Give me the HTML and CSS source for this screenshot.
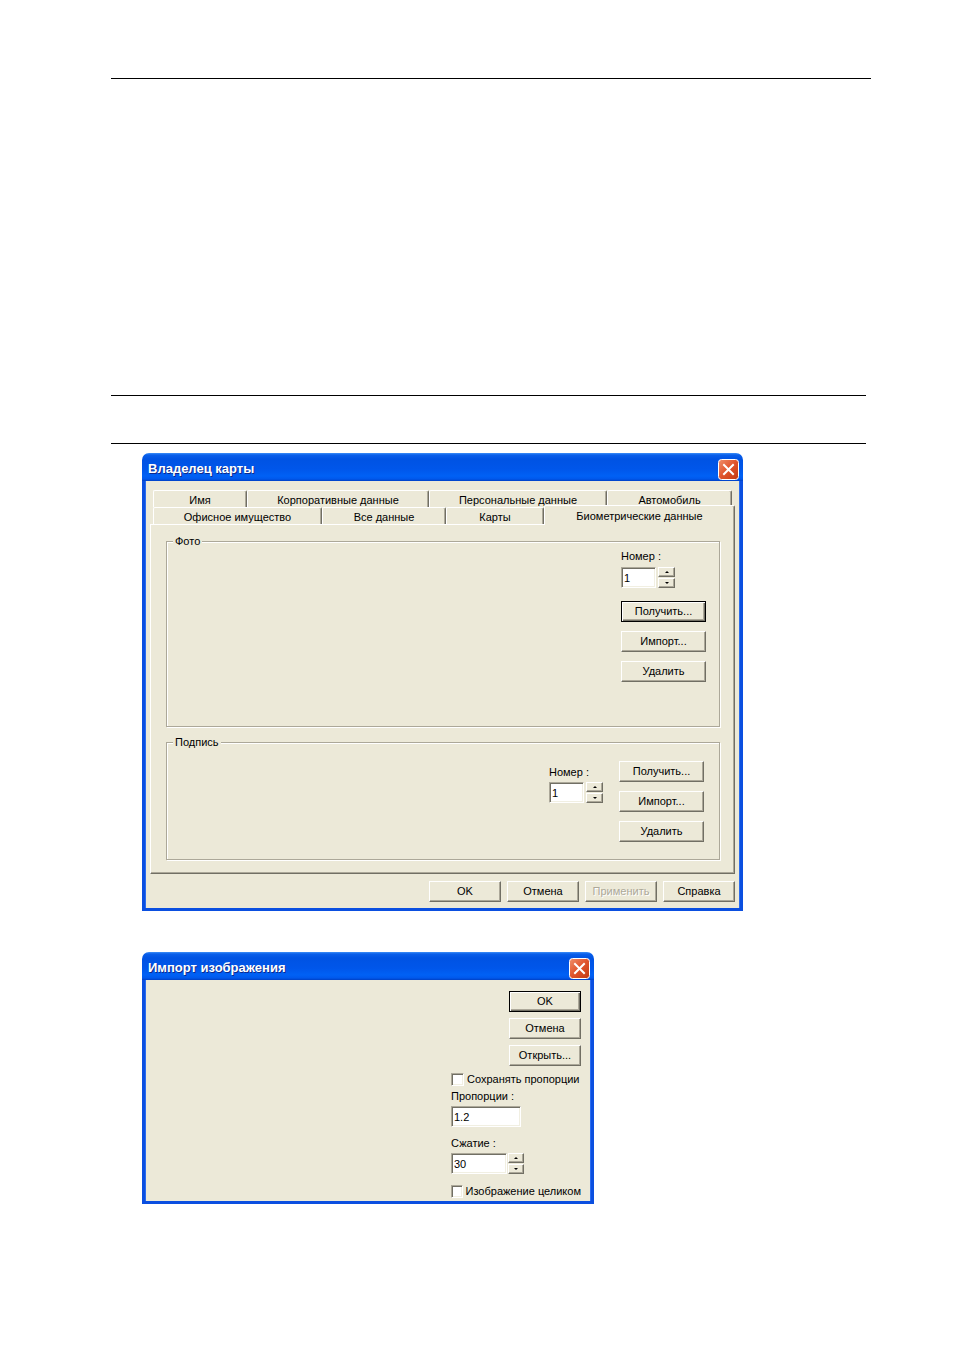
FILE: index.html
```html
<!DOCTYPE html>
<html lang="ru">
<head>
    <meta charset="UTF-8">
    <title>Владелец карты</title>
    <link rel="stylesheet" href="styles.css">
</head>
<body>
<div class="page">

    <div class="rule rule-top"></div>
    <div class="rule rule-mid"></div>
    <div class="rule rule-low"></div>

    <!-- окно свойств владельца карты -->
    <div class="window win-owner">
        <div class="titlebar">
            <span class="title">Владелец карты</span>
            <svg class="close" width="21" height="21" viewBox="0 0 21 21">
                <defs>
                    <linearGradient id="closeFill1" x1="0" y1="0" x2="1" y2="1">
                        <stop offset="0" stop-color="#f0906c"/>
                        <stop offset="0.5" stop-color="#e0532b"/>
                        <stop offset="1" stop-color="#c23a12"/>
                    </linearGradient>
                </defs>
                <rect x="0.5" y="0.5" width="20" height="20" rx="3" fill="url(#closeFill1)" stroke="#fff"/>
                <path d="M6 6 L15 15 M15 6 L6 15" stroke="#fff" stroke-width="2" stroke-linecap="square"/>
            </svg>
        </div>
        <div class="client owner-client">
            <div class="tab-row tab-row-back">
                <div class="tab" style="width:94px">Имя</div>
                <div class="tab" style="width:182px">Корпоративные данные</div>
                <div class="tab" style="width:178px">Персональные данные</div>
                <div class="tab" style="width:125px">Автомобиль</div>
            </div>
            <div class="tab-row tab-row-front">
                <div class="tab" style="width:169px">Офисное имущество</div>
                <div class="tab" style="width:124px">Все данные</div>
                <div class="tab" style="width:98px">Карты</div>
                <div class="tab tab-active" style="width:191px">Биометрические данные</div>
            </div>

            <div class="tab-panel">
                <div class="group group-photo">
                    <div class="group-label">Фото</div>
                    <div class="photo-body">
                        <div class="side-col">
                            <div class="field-label">Номер :</div>
                            <div class="spin-row">
                                <div class="edit edit-num">1</div>
                                <div class="spinner">
                                    <div class="spin-btn"><span class="arrow-up"></span></div>
                                    <div class="spin-btn"><span class="arrow-down"></span></div>
                                </div>
                            </div>
                            <div class="btn btn-side btn-default">Получить...</div>
                            <div class="btn btn-side">Импорт...</div>
                            <div class="btn btn-side">Удалить</div>
                        </div>
                    </div>
                </div>

                <div class="group group-sign">
                    <div class="group-label">Подпись</div>
                    <div class="sign-body">
                        <div class="num-col">
                            <div class="field-label">Номер :</div>
                            <div class="spin-row">
                                <div class="edit edit-num">1</div>
                                <div class="spinner">
                                    <div class="spin-btn"><span class="arrow-up"></span></div>
                                    <div class="spin-btn"><span class="arrow-down"></span></div>
                                </div>
                            </div>
                        </div>
                        <div class="btn-col">
                            <div class="btn btn-side">Получить...</div>
                            <div class="btn btn-side">Импорт...</div>
                            <div class="btn btn-side">Удалить</div>
                        </div>
                    </div>
                </div>
            </div>

            <div class="dialog-buttons">
                <div class="btn btn-dlg">OK</div>
                <div class="btn btn-dlg">Отмена</div>
                <div class="btn btn-dlg btn-disabled">Применить</div>
                <div class="btn btn-dlg">Справка</div>
            </div>
        </div>
    </div>

    <!-- окно импорта изображения -->
    <div class="window win-import">
        <div class="titlebar">
            <span class="title">Импорт изображения</span>
            <svg class="close" width="21" height="21" viewBox="0 0 21 21">
                <defs>
                    <linearGradient id="closeFill2" x1="0" y1="0" x2="1" y2="1">
                        <stop offset="0" stop-color="#f0906c"/>
                        <stop offset="0.5" stop-color="#e0532b"/>
                        <stop offset="1" stop-color="#c23a12"/>
                    </linearGradient>
                </defs>
                <rect x="0.5" y="0.5" width="20" height="20" rx="3" fill="url(#closeFill2)" stroke="#fff"/>
                <path d="M6 6 L15 15 M15 6 L6 15" stroke="#fff" stroke-width="2" stroke-linecap="square"/>
            </svg>
        </div>
        <div class="client import-client">
            <div class="import-buttons">
                <div class="btn btn-dlg btn-default">OK</div>
                <div class="btn btn-dlg">Отмена</div>
                <div class="btn btn-dlg">Открыть...</div>
            </div>
            <div class="import-options">
                <div class="check-row"><span class="checkbox"></span>Сохранять пропорции</div>
                <div class="field-label opt-label-first">Пропорции :</div>
                <div class="edit edit-ratio">1.2</div>
                <div class="field-label opt-label">Сжатие :</div>
                <div class="spin-row">
                    <div class="edit edit-zip">30</div>
                    <div class="spinner spinner-narrow">
                        <div class="spin-btn"><span class="arrow-up"></span></div>
                        <div class="spin-btn"><span class="arrow-down"></span></div>
                    </div>
                </div>
                <div class="check-row check-last"><span class="checkbox"></span>Изображение целиком</div>
            </div>
        </div>
    </div>

</div>
</body>
</html>
```

FILE: styles.css
```css
body {
    margin: 0;
    background-color: #ffffff;
    font-family: "Liberation Sans", Arial, sans-serif;
    font-size: 11px;
    color: #000000;
}

.page {
    padding-top: 78px;
    padding-bottom: 120px;
}

/* линии документа */
.rule {
    height: 1px;
    background-color: #000000;
    margin-left: 111px;
}

.rule-top {
    width: 760px;
}

.rule-mid {
    width: 755px;
    margin-top: 316px;
}

.rule-low {
    width: 755px;
    margin-top: 47px;
}

/* окно в стиле XP */
.window {
    margin-left: 142px;
}

.win-owner {
    width: 601px;
    margin-top: 9px;
}

.win-import {
    width: 452px;
    margin-top: 41px;
}

.titlebar {
    height: 28px;
    box-sizing: border-box;
    display: flex;
    justify-content: space-between;
    align-items: flex-start;
    padding: 6px 4px 0 6px;
    border-radius: 7px 7px 0 0;
    background: linear-gradient(#3d8ff7 0, #0a5fea 2px, #0053e3 6px, #0056ea 16px, #0061f5 23px, #0058ec 26px, #0040c4 28px);
}

.title {
    color: #ffffff;
    font-weight: bold;
    font-size: 13px;
    line-height: 16px;
    margin-top: 2px;
    text-shadow: 1px 1px #0d2a8c;
}

.close {
    display: block;
}

.client {
    background-color: #ece9d8;
    border: 3px solid #0b4fe0;
    border-top: 0;
    box-shadow: inset 1px 0 #2a6cf0, inset -1px 0 #2a6cf0;
}

.owner-client {
    height: 430px;
    box-sizing: border-box;
    padding: 9px 5px 0 5px;
}

.import-client {
    height: 224px;
    box-sizing: border-box;
    padding: 11px 10px 0 306px;
}

/* вкладки в два ряда */
.tab-row {
    display: flex;
    height: 17px;
    margin-left: 3px;
    align-items: flex-end;
}

.tab {
    height: 17px;
    box-sizing: border-box;
    padding-top: 3px;
    line-height: 13px;
    text-align: center;
    white-space: nowrap;
    background-color: #ece9d8;
    border-top: 1px solid #ffffff;
    border-left: 1px solid #ffffff;
    border-right: 1px solid #716f64;
    border-radius: 2px 2px 0 0;
    box-shadow: inset -1px 0 #aca899;
}

.tab-active {
    position: relative;
    z-index: 1;
    height: 20px;
    margin-bottom: -1px;
    padding-top: 4px;
}

.tab-panel {
    height: 350px;
    box-sizing: border-box;
    padding: 16px 14px 0 15px;
    border-top: 1px solid #ffffff;
    border-left: 1px solid #ffffff;
    border-right: 1px solid #716f64;
    border-bottom: 1px solid #716f64;
    box-shadow: inset -1px -1px #aca899;
}

/* рамки групп */
.group {
    box-sizing: border-box;
    border: 1px solid #aca899;
    box-shadow: inset 1px 1px #ffffff, 1px 1px #ffffff;
}

.group-photo {
    height: 186px;
}

.group-sign {
    height: 118px;
    margin-top: 15px;
}

.group-label {
    width: fit-content;
    margin: -7px 0 0 6px;
    padding: 0 2px;
    line-height: 13px;
    background-color: #ece9d8;
}

.photo-body {
    display: flex;
    justify-content: flex-end;
    padding: 2px 13px 0 0;
}

.side-col {
    width: 85px;
}

.sign-body {
    display: flex;
    justify-content: flex-end;
    gap: 16px;
    padding: 12px 15px 0 0;
}

.num-col {
    padding-top: 5px;
}

.btn-col {
    width: 85px;
}

.field-label {
    line-height: 13px;
    white-space: nowrap;
}

.spin-row {
    display: flex;
    gap: 2px;
    margin-top: 4px;
}

.num-col .spin-row {
    margin-top: 3px;
}

/* поля ввода */
.edit {
    height: 21px;
    box-sizing: border-box;
    padding: 3px 0 0 2px;
    line-height: 14px;
    background-color: #ffffff;
    border-top: 1px solid #aca899;
    border-left: 1px solid #aca899;
    border-right: 1px solid #ffffff;
    border-bottom: 1px solid #ffffff;
    box-shadow: inset 1px 1px #716f64, inset -1px -1px #f1efe2;
}

.edit-num {
    width: 35px;
}

.edit-ratio {
    width: 70px;
    margin-top: 3px;
}

.edit-zip {
    width: 56px;
}

.spinner {
    width: 17px;
    display: flex;
    flex-direction: column;
    gap: 1px;
}

.spinner-narrow {
    width: 16px;
    margin-left: -1px;
}

.spin-btn {
    height: 10px;
    box-sizing: border-box;
    display: flex;
    align-items: center;
    justify-content: center;
    background-color: #ece9d8;
    border-top: 1px solid #ffffff;
    border-left: 1px solid #ffffff;
    border-right: 1px solid #716f64;
    border-bottom: 1px solid #716f64;
    box-shadow: inset -1px -1px #aca899;
}

.arrow-up {
    width: 0;
    height: 0;
    border-left: 2px solid transparent;
    border-right: 2px solid transparent;
    border-bottom: 2px solid #000000;
}

.arrow-down {
    width: 0;
    height: 0;
    border-left: 2px solid transparent;
    border-right: 2px solid transparent;
    border-top: 2px solid #000000;
}

/* кнопки */
.btn {
    height: 21px;
    box-sizing: border-box;
    line-height: 19px;
    text-align: center;
    white-space: nowrap;
    background-color: #ece9d8;
    border-top: 1px solid #ffffff;
    border-left: 1px solid #ffffff;
    border-right: 1px solid #716f64;
    border-bottom: 1px solid #716f64;
    box-shadow: inset -1px -1px #aca899;
}

.btn-default {
    border: 1px solid #000000;
    box-shadow: inset 1px 1px #ffffff, inset -1px -1px #716f64, inset -2px -2px #aca899;
}

.btn-side {
    width: 85px;
    margin-top: 9px;
}

.side-col .btn-default {
    margin-top: 13px;
}

.btn-col .btn-side:first-child {
    margin-top: 0;
}

.btn-dlg {
    width: 72px;
}

.btn-disabled {
    color: #aca899;
    text-shadow: 1px 1px #ffffff;
}

.dialog-buttons {
    display: flex;
    justify-content: flex-end;
    gap: 6px;
    margin-top: 7px;
}

/* окно импорта */
.import-buttons {
    display: flex;
    flex-direction: column;
    align-items: flex-end;
    gap: 6px;
}

.import-options {
    margin-top: 7px;
}

.check-row {
    display: flex;
    align-items: center;
    gap: 3px;
    height: 13px;
    line-height: 13px;
    white-space: nowrap;
}

.check-last {
    margin-top: 11px;
}

.checkbox {
    width: 13px;
    height: 13px;
    box-sizing: border-box;
    background-color: #ffffff;
    border-top: 1px solid #aca899;
    border-left: 1px solid #aca899;
    border-right: 1px solid #ffffff;
    border-bottom: 1px solid #ffffff;
    box-shadow: inset 1px 1px #716f64, inset -1px -1px #f1efe2;
}

.opt-label-first {
    margin-top: 4px;
}

.opt-label {
    margin-top: 10px;
}

.import-options .spin-row {
    margin-top: 3px;
}
```
